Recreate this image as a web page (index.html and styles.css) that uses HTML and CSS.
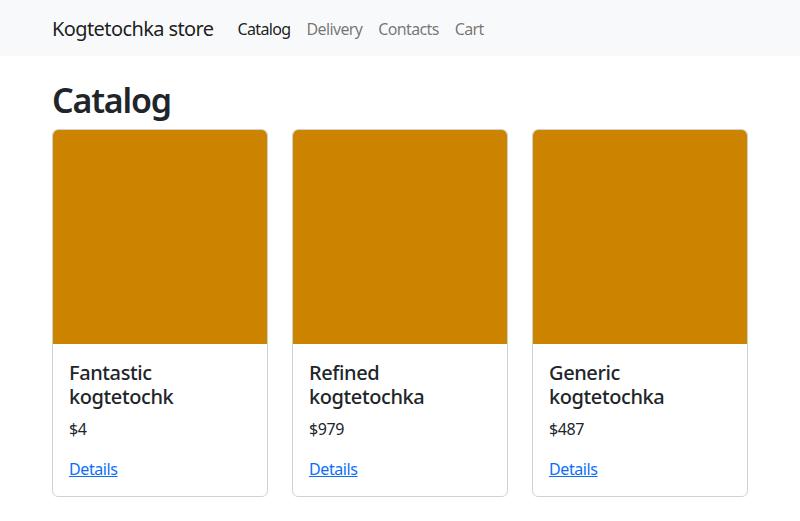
FILE: index.html
```html
<!DOCTYPE html>
<html lang="en">
<head>
<meta charset="utf-8">
<title>Kogtetochka store</title>
<link rel="stylesheet" href="styles.css">
</head>
<body>
<nav class="navbar">
  <div class="container nav-inner">
    <a class="brand" href="#">Kogtetochka store</a>
    <ul class="nav-links">
      <li><a class="nav-link active" href="#">Catalog</a></li>
      <li><a class="nav-link" href="#">Delivery</a></li>
      <li><a class="nav-link" href="#">Contacts</a></li>
      <li><a class="nav-link" href="#">Cart</a></li>
    </ul>
  </div>
</nav>
<main class="container">
  <h1 class="page-title">Catalog</h1>
  <div class="grid">
    <div class="card">
      <div class="card-img"></div>
      <div class="card-body">
        <h5 class="card-title">Fantastic kogtetochk</h5>
        <p class="card-text">$4</p>
        <a class="card-link" href="#">Details</a>
      </div>
    </div>
    <div class="card">
      <div class="card-img"></div>
      <div class="card-body">
        <h5 class="card-title">Refined kogtetochka</h5>
        <p class="card-text">$979</p>
        <a class="card-link" href="#">Details</a>
      </div>
    </div>
    <div class="card">
      <div class="card-img"></div>
      <div class="card-body">
        <h5 class="card-title">Generic kogtetochka</h5>
        <p class="card-text">$487</p>
        <a class="card-link" href="#">Details</a>
      </div>
    </div>
  </div>
</main>
</body>
</html>
```
FILE: styles.css
```css
* { box-sizing: border-box; }
body {
  margin: 0;
  font-family: "Noto Sans", "Open Sans", sans-serif;
  font-size: 16px;
  line-height: 1.5;
  letter-spacing: -0.025em;
  color: #212529;
  background: #fff;
}
.container {
  width: 720px;
  margin: 0 auto;
  padding: 0 12px;
}
.navbar {
  background: #f8f9fa;
  padding: 9px 0 7px;
}
.nav-inner {
  display: flex;
  align-items: center;
}
.brand {
  font-size: 20px;
  line-height: 30px;
  padding: 5px 0;
  margin-right: 16px;
  color: rgba(0,0,0,.9);
  text-decoration: none;
  letter-spacing: -0.03em;
}
.nav-links {
  display: flex;
  list-style: none;
  margin: 0;
  padding: 0;
}
.nav-link {
  display: block;
  padding: 8px;
  color: rgba(0,0,0,.55);
  text-decoration: none;
  letter-spacing: -0.04em;
}
.nav-link.active { color: rgba(0,0,0,.9); }
.page-title {
  font-size: 34px;
  font-weight: 600;
  line-height: 1.2;
  margin: 24px 0 8px;
  letter-spacing: -0.035em;
}
.grid {
  display: grid;
  grid-template-columns: repeat(3, 1fr);
  gap: 24px;
}
.card {
  border: 1px solid rgba(0,0,0,.175);
  border-radius: 6px;
  overflow: hidden;
  display: flex;
  flex-direction: column;
}
.card-img {
  aspect-ratio: 1 / 1;
  background: #cc8400;
  border-radius: 5px 5px 0 0;
}
.card-body { padding: 17px 16px 15px; }
.card-title {
  font-size: 20px;
  font-weight: 500;
  line-height: 1.2;
  margin: 0 0 8px;
}
.card-text { margin: 0 0 16px; }
.card-link { color: #0d6efd; }
```
